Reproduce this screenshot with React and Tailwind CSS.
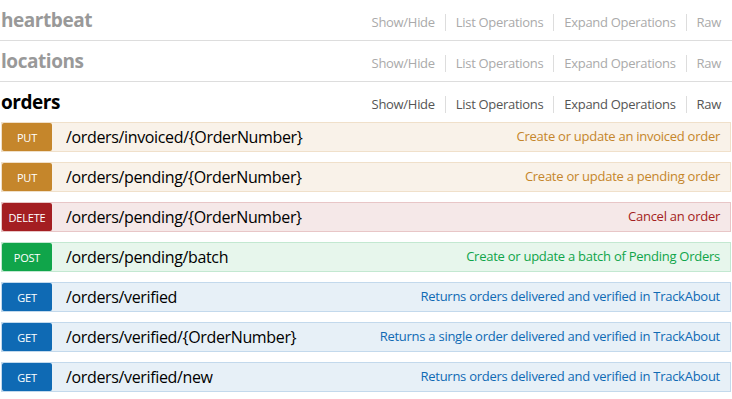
const resources = [
  { name: 'heartbeat', active: false },
  { name: 'locations', active: false },
  { name: 'orders', active: true },
];

const methodStyles = {
  put: { row: 'bg-[#f9f2e9] border-[#f0e0ca]', badge: 'bg-[#c5862b]', desc: 'text-[#c5862b]' },
  delete: { row: 'bg-[#f5e8e8] border-[#e8c6c7]', badge: 'bg-[#a41e22]', desc: 'text-[#a41e22]' },
  post: { row: 'bg-[#e7f6ec] border-[#c3e8d1]', badge: 'bg-[#10a54a]', desc: 'text-[#10a54a]' },
  get: { row: 'bg-[#e7f0f7] border-[#c3d9ec]', badge: 'bg-[#0f6ab4]', desc: 'text-[#0f6ab4]' },
};

const operations = [
  { method: 'put', path: '/orders/invoiced/{OrderNumber}', summary: 'Create or update an invoiced order' },
  { method: 'put', path: '/orders/pending/{OrderNumber}', summary: 'Create or update a pending order' },
  { method: 'delete', path: '/orders/pending/{OrderNumber}', summary: 'Cancel an order' },
  { method: 'post', path: '/orders/pending/batch', summary: 'Create or update a batch of Pending Orders' },
  { method: 'get', path: '/orders/verified', summary: 'Returns orders delivered and verified in TrackAbout' },
  { method: 'get', path: '/orders/verified/{OrderNumber}', summary: 'Returns a single order delivered and verified in TrackAbout' },
  { method: 'get', path: '/orders/verified/new', summary: 'Returns orders delivered and verified in TrackAbout' },
];

const options = ['Show/Hide', 'List Operations', 'Expand Operations', 'Raw'];

function ResourceHeading({ resource }) {
  return (
    <div
      className={`flex items-center justify-between h-10 pl-[1px] pr-[11px] ${
        resource.active ? '' : 'border-b border-[#dddddd] box-content'
      }`}
    >
      <h2
        className={`text-[19px] font-bold leading-none tracking-[-0.45px] ${
          resource.active ? 'text-black' : 'text-[#999999]'
        }`}
      >
        {resource.name}
      </h2>
      <ul className="flex items-center mt-[4px] text-[13px] tracking-[-0.3px]">
        {options.map((opt, i) => (
          <li
            key={opt}
            className={`leading-[17px] ${
              i < options.length - 1 ? 'border-r border-[#dddddd] pr-[10px]' : ''
            } ${i > 0 ? 'pl-[10px]' : ''} ${resource.active ? 'text-[#555555]' : 'text-[#aaaaaa]'}`}
          >
            {opt}
          </li>
        ))}
      </ul>
    </div>
  );
}

function Operation({ op }) {
  const s = methodStyles[op.method];
  return (
    <div className={`flex items-center h-[30px] border mb-[10px] ${s.row}`}>
      <span
        className={`w-[50px] h-[28px] pt-[2px] rounded-[2px] flex items-center justify-center text-white text-[11px] tracking-[-0.2px] uppercase ${s.badge}`}
      >
        {op.method}
      </span>
      <span className="pl-[14px] text-[16px] tracking-[-0.35px] text-black">{op.path}</span>
      <span className={`ml-auto pr-[10px] text-[13px] tracking-[-0.26px] ${s.desc}`}>{op.summary}</span>
    </div>
  );
}

export default function App() {
  return (
    <div className="w-[732px] h-[399px] overflow-hidden bg-white font-['Open_Sans',sans-serif]">
      {resources.map((r) => (
        <ResourceHeading key={r.name} resource={r} />
      ))}
      <div className="pl-[1px] pr-[1px]">
        {operations.map((op, i) => (
          <Operation key={i} op={op} />
        ))}
      </div>
    </div>
  );
}
